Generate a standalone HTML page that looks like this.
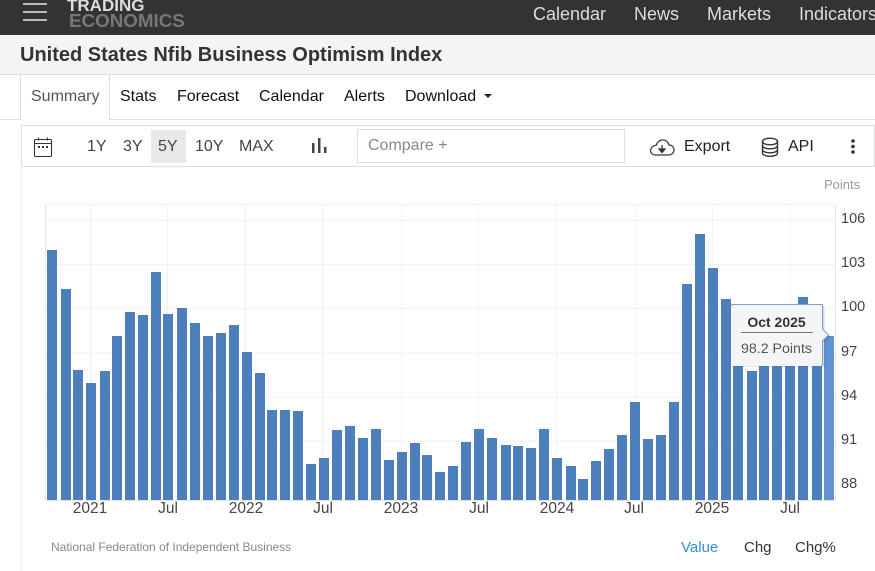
<!DOCTYPE html>
<html><head><meta charset="utf-8"><title>United States Nfib Business Optimism Index</title>
<style>
html,body{margin:0;padding:0;width:875px;height:571px;overflow:hidden;background:#fff;font-family:"Liberation Sans",Arial,sans-serif}
.a{position:absolute;white-space:nowrap}
#page{position:relative;width:875px;height:571px;overflow:hidden}
.nav{top:3px;font-size:18px;line-height:22px;color:#ddd}
.tab{top:87px;font-size:16px;line-height:19px;color:#111}
.rng{top:137px;font-size:16px;line-height:19px;color:#444}
svg{position:absolute;left:0;top:0}
</style></head><body><div id="page">
<div class="a" style="left:0;top:0;width:875px;height:35px;background:#333"></div>
<div class="a" style="left:23px;top:3px;width:24px;height:2px;background:#bbb"></div>
<div class="a" style="left:23px;top:11px;width:24px;height:2px;background:#bbb"></div>
<div class="a" style="left:23px;top:19px;width:24px;height:2px;background:#bbb"></div>
<div class="a" style="left:67px;top:-3px;font-weight:bold;font-size:17px;line-height:18px;color:#ddd">TRADING</div>
<div class="a" style="left:69px;top:11px;font-weight:bold;font-size:18.8px;line-height:20px;color:#777">ECONOMICS</div>
<div class="a nav" style="left:533px">Calendar</div>
<div class="a nav" style="left:634px">News</div>
<div class="a nav" style="left:707px">Markets</div>
<div class="a nav" style="left:799px">Indicators</div>

<div class="a" style="left:0;top:35px;width:875px;height:39px;background:#f4f4f4;border-bottom:1px solid #ddd"></div>
<div class="a" style="left:20px;top:43px;font-weight:bold;font-size:20px;line-height:24px;color:#333">United States Nfib Business Optimism Index</div>

<div class="a" style="left:0;top:119px;width:875px;height:1px;background:#ddd"></div>
<div class="a" style="left:20px;top:75px;width:88px;height:45px;background:#fff;border-left:1px solid #ddd;border-right:1px solid #ddd"></div>
<div class="a tab" style="left:31px;color:#555">Summary</div>
<div class="a tab" style="left:120px">Stats</div>
<div class="a tab" style="left:177px">Forecast</div>
<div class="a tab" style="left:259px">Calendar</div>
<div class="a tab" style="left:344px">Alerts</div>
<div class="a tab" style="left:405px">Download</div>
<div class="a" style="left:484px;top:94px;width:0;height:0;border-left:4px solid transparent;border-right:4px solid transparent;border-top:4px solid #222"></div>

<div class="a" style="left:21px;top:125px;width:852px;height:40px;border:1px solid #ddd"></div>
<div class="a" style="left:21px;top:166px;width:1px;height:405px;background:#f0f0f0"></div>
<div class="a" style="left:151px;top:130px;width:35px;height:33px;background:#e8e8e8"></div>
<div class="a rng" style="left:87px">1Y</div>
<div class="a rng" style="left:123px">3Y</div>
<div class="a rng" style="left:158px">5Y</div>
<div class="a rng" style="left:195px">10Y</div>
<div class="a rng" style="left:239px">MAX</div>
<div class="a" style="left:357px;top:129px;width:266px;height:32px;border:1px solid #ddd"></div>
<div class="a" style="left:368px;top:136px;font-size:16px;line-height:19px;color:#888">Compare +</div>
<div class="a" style="left:684px;top:137px;font-size:16px;line-height:19px;color:#222">Export</div>
<div class="a" style="left:788px;top:137px;font-size:16px;line-height:19px;color:#222">API</div>
<div class="a" style="left:824px;top:177px;font-size:13px;line-height:15px;color:#999">Points</div>

<svg width="875" height="571" viewBox="0 0 875 571">
<!-- calendar icon -->
<g fill="none" stroke="#333" stroke-width="1.1">
<rect x="34.500" y="139.500" width="17" height="17" rx="1"/>
<path d="M34.500 143.500H51.500M38.500 137.500V140.500M47.500 137.500V140.500"/>
</g>
<g fill="#333"><rect x="38" y="146" width="2" height="2"/><rect x="42" y="146" width="2" height="2"/><rect x="46" y="146" width="2" height="2"/></g>
<!-- bars icon -->
<g fill="#444"><rect x="312" y="143" width="2.500" height="10"/><rect x="318" y="138" width="2.500" height="15"/><rect x="324" y="147" width="2.500" height="6"/></g>
<!-- cloud icon -->
<path d="M655 155H668C672 155 674 152.500 674 150C674 147 672 145 669 145C668 141.500 665 139.500 662 140C659 140.500 657 142.500 656.500 145C653 145.500 650.500 148 650.500 150.500C650.500 153 652.500 155 655 155Z" fill="none" stroke="#333" stroke-width="1.200"/>
<path d="M662 145V149.500M659 149L662 152.500L665 149Z" fill="#333" stroke="#333" stroke-width="1.300"/>
<!-- database icon -->
<g fill="none" stroke="#333" stroke-width="1.400">
<ellipse cx="770" cy="141.500" rx="7.500" ry="3.300"/>
<path d="M762.500 141.500V153C762.500 155 765.500 156.300 770 156.300C774.500 156.300 777.500 155 777.500 153V141.500M762.500 145.500C762.500 147.500 765.500 148.800 770 148.800C774.500 148.800 777.500 147.500 777.500 145.500M762.500 149.500C762.500 151.500 765.500 152.800 770 152.800C774.500 152.800 777.500 151.500 777.500 149.500"/>
</g>
<!-- kebab -->
<g fill="#333"><circle cx="853" cy="141" r="1.800"/><circle cx="853" cy="146.500" r="1.800"/><circle cx="853" cy="152" r="1.800"/></g>

<!-- grid -->
<g stroke="#e6e6e6" stroke-width="1" stroke-dasharray="1 1" fill="none">
<path d="M46 204.500H835M46 220.500H835M46 264.500H835M46 308.500H835M46 353.500H835M46 397.500H835M46 441.500H835"/>
<path d="M90.500 204V500M167.500 204V500M245.500 204V500M322.500 204V500M401.500 204V500M478.500 204V500M556.500 204V500M635.500 204V500M712.500 204V500M790.500 204V500"/>
</g>
<path d="M45.500 204V500M835.500 204V500M46 500.500H835" stroke="#e6e6e6" fill="none"/>

<!-- bars -->
<g fill="#4d7fbd">
<rect x="47" y="250" width="10" height="250"/><rect x="61" y="289" width="10" height="211"/><rect x="73" y="370" width="10" height="130"/><rect x="86" y="383" width="10" height="117"/><rect x="100" y="371" width="10" height="129"/>
<rect x="112" y="336" width="10" height="164"/><rect x="125" y="312" width="10" height="188"/><rect x="138" y="315" width="10" height="185"/><rect x="151" y="272" width="10" height="228"/><rect x="163" y="314" width="10" height="186"/>
<rect x="177" y="308" width="10" height="192"/><rect x="190" y="323" width="10" height="177"/><rect x="203" y="336" width="10" height="164"/><rect x="216" y="333" width="10" height="167"/><rect x="229" y="325" width="10" height="175"/>
<rect x="242" y="352" width="10" height="148"/><rect x="255" y="373" width="10" height="127"/><rect x="267" y="410" width="10" height="90"/><rect x="280" y="410" width="10" height="90"/><rect x="293" y="411" width="10" height="89"/>
<rect x="306" y="464" width="10" height="36"/><rect x="319" y="458" width="10" height="42"/><rect x="332" y="430" width="10" height="70"/><rect x="345" y="426" width="10" height="74"/><rect x="358" y="438" width="10" height="62"/>
<rect x="371" y="429" width="10" height="71"/><rect x="384" y="460" width="10" height="40"/><rect x="397" y="452" width="10" height="48"/><rect x="410" y="443" width="10" height="57"/><rect x="422" y="455" width="10" height="45"/>
<rect x="435" y="472" width="10" height="28"/><rect x="448" y="466" width="10" height="34"/><rect x="461" y="442" width="10" height="58"/><rect x="474" y="429" width="10" height="71"/><rect x="487" y="438" width="10" height="62"/>
<rect x="501" y="445" width="10" height="55"/><rect x="513" y="446" width="10" height="54"/><rect x="526" y="448" width="10" height="52"/><rect x="539" y="429" width="10" height="71"/><rect x="552" y="458" width="10" height="42"/>
<rect x="566" y="466" width="10" height="34"/><rect x="578" y="479" width="10" height="21"/><rect x="591" y="461" width="10" height="39"/><rect x="604" y="449" width="10" height="51"/><rect x="617" y="435" width="10" height="65"/>
<rect x="630" y="402" width="10" height="98"/><rect x="643" y="439" width="10" height="61"/><rect x="656" y="435" width="10" height="65"/><rect x="669" y="402" width="10" height="98"/><rect x="682" y="284" width="10" height="216"/>
<rect x="695" y="234" width="10" height="266"/><rect x="708" y="268" width="10" height="232"/><rect x="721" y="299" width="10" height="201"/><rect x="733" y="330" width="10" height="170"/><rect x="747" y="371" width="10" height="129"/>
<rect x="759" y="332" width="10" height="168"/><rect x="772" y="332" width="10" height="168"/><rect x="785" y="320" width="10" height="180"/><rect x="798" y="297" width="10" height="203"/><rect x="812" y="330" width="10" height="170"/>
<rect x="824" y="336" width="10" height="164" fill="#6093d3"/>
</g>

<!-- y labels -->
<g font-family="'Liberation Sans',Arial,sans-serif" font-size="14.500" fill="#444">
<text x="841" y="223">106</text><text x="841" y="267">103</text><text x="841" y="311">100</text><text x="841" y="356">97</text><text x="841" y="400">94</text><text x="841" y="444">91</text><text x="841" y="488">88</text>
</g>
<!-- x labels -->
<g font-family="'Liberation Sans',Arial,sans-serif" font-size="15.500" fill="#444" text-anchor="middle">
<text x="90" y="513">2021</text><text x="168" y="513">Jul</text><text x="246" y="513">2022</text><text x="323" y="513">Jul</text><text x="401" y="513">2023</text><text x="479" y="513">Jul</text><text x="557" y="513">2024</text><text x="634" y="513">Jul</text><text x="712" y="513">2025</text><text x="790" y="513">Jul</text>
</g>

<!-- tooltip -->
<path d="M732 305H823V329L829 335L823 341V365H732Z" fill="#000" opacity=".14" transform="translate(1.500 1.500)"/>
<path d="M732 304.500H822.500V329L828.500 335L822.500 341V365H732Z" fill="#f4f5f7" stroke="#7ba0cf" stroke-width="1"/>
<path d="M732 306V365.300H821.500" fill="none" stroke="#f4f5f7" stroke-width="1.500"/>
<text x="776.500" y="327" font-family="'Liberation Sans',Arial,sans-serif" font-size="14" font-weight="bold" fill="#333" text-anchor="middle">Oct 2025</text>
<path d="M741 332.500H813" stroke="#777" stroke-width="1"/>
<text x="776.500" y="353" font-family="'Liberation Sans',Arial,sans-serif" font-size="14.200" fill="#555" text-anchor="middle">98.2 Points</text>
</svg>

<div class="a" style="left:51px;top:540px;font-size:12px;line-height:14px;color:#888">National Federation of Independent Business</div>
<div class="a" style="left:681px;top:539px;font-size:15px;line-height:17px;color:#2e90d9">Value</div>
<div class="a" style="left:744px;top:539px;font-size:15px;line-height:17px;color:#333">Chg</div>
<div class="a" style="left:795px;top:539px;font-size:15px;line-height:17px;color:#333">Chg%</div>
</div></body></html>
